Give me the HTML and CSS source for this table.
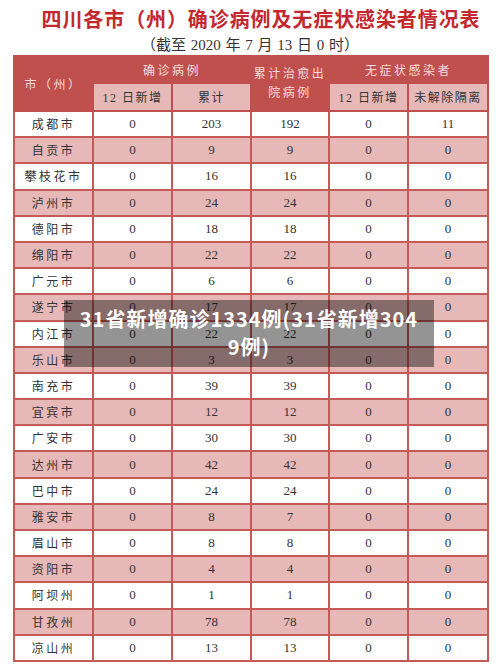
FILE: index.html
```html
<!DOCTYPE html>
<html lang="zh-CN">
<head>
<meta charset="utf-8">
<title>四川各市（州）确诊病例及无症状感染者情况表</title>
<link rel="stylesheet" href="styles.css">
</head>
<body>
<div class="page">
  <h1 class="title">四川各市（州）确诊病例及无症状感染者情况表</h1>
  <p class="subtitle">（截至 2020 年 7 月 13 日 0 时）</p>
  <table class="grid">
    <colgroup>
      <col class="c1"><col class="c2"><col class="c3"><col class="c4"><col class="c5"><col class="c6">
    </colgroup>
    <thead>
      <tr class="h1">
        <th rowspan="2" class="hd">市（州）</th>
        <th colspan="2" class="hd">确诊病例</th>
        <th rowspan="2" class="hd two">累计治愈出<br>院病例</th>
        <th colspan="2" class="hd">无症状感染者</th>
      </tr>
      <tr class="h2">
        <th class="sub">12 日新增</th>
        <th class="sub">累计</th>
        <th class="sub">12 日新增</th>
        <th class="sub">未解除隔离</th>
      </tr>
    </thead>
    <tbody>
      <tr><td class="city">成都市</td><td>0</td><td>203</td><td>192</td><td>0</td><td>11</td></tr>
      <tr class="pink"><td class="city">自贡市</td><td>0</td><td>9</td><td>9</td><td>0</td><td>0</td></tr>
      <tr><td class="city">攀枝花市</td><td>0</td><td>16</td><td>16</td><td>0</td><td>0</td></tr>
      <tr class="pink"><td class="city">泸州市</td><td>0</td><td>24</td><td>24</td><td>0</td><td>0</td></tr>
      <tr><td class="city">德阳市</td><td>0</td><td>18</td><td>18</td><td>0</td><td>0</td></tr>
      <tr class="pink"><td class="city">绵阳市</td><td>0</td><td>22</td><td>22</td><td>0</td><td>0</td></tr>
      <tr><td class="city">广元市</td><td>0</td><td>6</td><td>6</td><td>0</td><td>0</td></tr>
      <tr class="pink"><td class="city">遂宁市</td><td>0</td><td>17</td><td>17</td><td>0</td><td>0</td></tr>
      <tr><td class="city">内江市</td><td>0</td><td>22</td><td>22</td><td>0</td><td>0</td></tr>
      <tr class="pink"><td class="city">乐山市</td><td>0</td><td>3</td><td>3</td><td>0</td><td>0</td></tr>
      <tr><td class="city">南充市</td><td>0</td><td>39</td><td>39</td><td>0</td><td>0</td></tr>
      <tr class="pink"><td class="city">宜宾市</td><td>0</td><td>12</td><td>12</td><td>0</td><td>0</td></tr>
      <tr><td class="city">广安市</td><td>0</td><td>30</td><td>30</td><td>0</td><td>0</td></tr>
      <tr class="pink"><td class="city">达州市</td><td>0</td><td>42</td><td>42</td><td>0</td><td>0</td></tr>
      <tr><td class="city">巴中市</td><td>0</td><td>24</td><td>24</td><td>0</td><td>0</td></tr>
      <tr class="pink"><td class="city">雅安市</td><td>0</td><td>8</td><td>7</td><td>0</td><td>0</td></tr>
      <tr><td class="city">眉山市</td><td>0</td><td>8</td><td>8</td><td>0</td><td>0</td></tr>
      <tr class="pink"><td class="city">资阳市</td><td>0</td><td>4</td><td>4</td><td>0</td><td>0</td></tr>
      <tr><td class="city">阿坝州</td><td>0</td><td>1</td><td>1</td><td>0</td><td>0</td></tr>
      <tr class="pink"><td class="city">甘孜州</td><td>0</td><td>78</td><td>78</td><td>0</td><td>0</td></tr>
      <tr><td class="city">凉山州</td><td>0</td><td>13</td><td>13</td><td>0</td><td>0</td></tr>
    </tbody>
  </table>
  <div class="caption">31省新增确诊1334例(31省新增304<br>9例)</div>
</div>
</body>
</html>
```

FILE: styles.css
```css
html, body {
  margin: 0;
  padding: 0;
  background: #ffffff;
}

.page {
  position: relative;
  width: 500px;
  height: 668px;
  overflow: hidden;
}

.title {
  margin: 0;
  padding: 6px 0 0 22px;
  font-family: "Noto Sans CJK SC", sans-serif;
  font-size: 20px;
  font-weight: 700;
  line-height: 26px;
  letter-spacing: 0.9px;
  color: #c3282f;
  text-align: center;
  white-space: nowrap;
}

.subtitle {
  margin: 4px 0 0 0;
  font-family: "Liberation Serif", "Noto Sans CJK SC", serif;
  font-size: 15px;
  line-height: 19px;
  color: #333333;
  text-align: center;
  word-spacing: 1px;
}

.grid {
  margin: 0 0 0 13px;
  width: 474px;
  border-collapse: collapse;
  table-layout: fixed;
  font-family: "Liberation Serif", "Noto Sans CJK SC", serif;
  color: #333333;
}

.c1, .c2, .c3, .c5 { width: 79px; }
.c4 { width: 78px; }
.c6 { width: 80px; }

.grid th, .grid td {
  padding: 0;
  text-align: center;
  vertical-align: middle;
}

.hd {
  background: #c0504d;
  color: #f6dcdb;
  font-weight: 400;
  font-size: 12px;
  letter-spacing: 2.5px;
  border: 2px solid #c0504d;
}

.two {
  line-height: 19px;
  letter-spacing: 2.5px;
}

.h1 { height: 27px; }
.h2 { height: 28px; }

.sub {
  background: #e6b8b7;
  color: #333333;
  font-weight: 400;
  font-size: 12px;
  letter-spacing: 1.5px;
  border: 2px solid #c0504d;
  border-top: 2px solid #f3e4e3;
}

.grid tbody tr {
  height: 26.2px;
  background: #ffffff;
}

.grid tbody tr.pink {
  background: #e6b8b7;
}

.grid td {
  border: 2px solid #c55a57;
  font-size: 13px;
}

.grid td.city {
  font-size: 12px;
  letter-spacing: 2.5px;
}

.caption {
  position: absolute;
  left: 64px;
  top: 300px;
  width: 370px;
  height: 67px;
  box-sizing: border-box;
  padding-top: 5px;
  background: rgba(0, 0, 0, 0.42);
  color: #ffffff;
  font-family: "Noto Sans CJK SC", sans-serif;
  font-weight: 700;
  font-size: 20px;
  line-height: 28px;
  letter-spacing: 1px;
  text-align: center;
}
```
